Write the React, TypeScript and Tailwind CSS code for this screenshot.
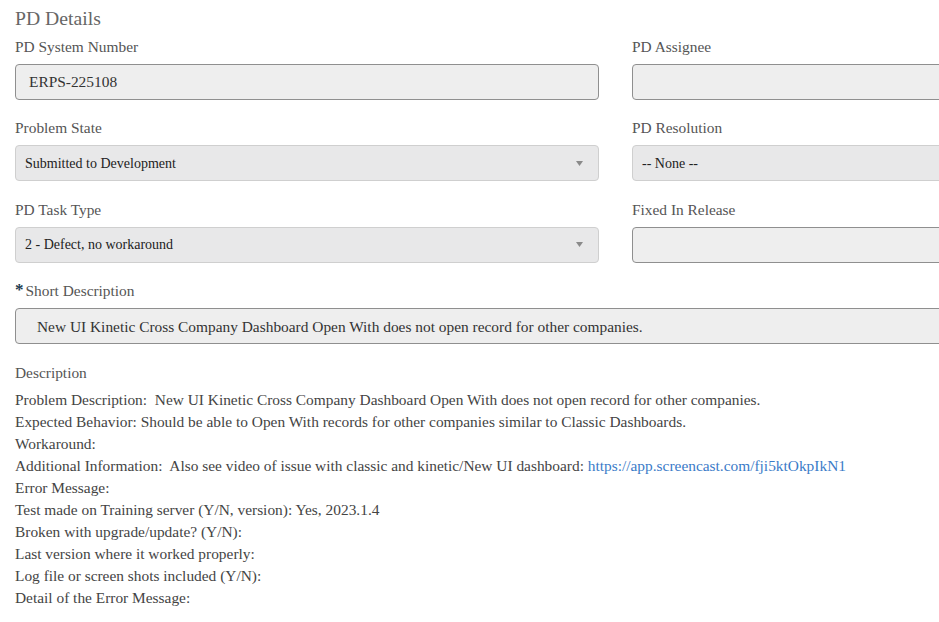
import React from "react";

const serif = { fontFamily: '"Liberation Serif", "Times New Roman", serif' };

const Label = ({ children, required }: { children: React.ReactNode; required?: boolean }) => (
  <div className="text-[15.4px] leading-[20px] text-[#555] h-[20px] flex items-start">
    {required && <span className="text-[#1d3b4f] text-[17px] font-bold mr-[2px] leading-[18px]">*</span>}
    {children}
  </div>
);

const TextBox = ({ value, pad = "pl-[13px]" }: { value?: string; pad?: string }) => (
  <div
    className={`h-[36px] rounded-[4px] border border-[#8f8f8f] bg-[#eeeeee] flex items-center ${pad} text-[15.4px] text-[#333]`}
  >
    {value}
  </div>
);

const Select = ({ value }: { value: string }) => (
  <div className="h-[36px] rounded-[4px] border border-[#cfcfcf] bg-[#e8e8e9] flex items-center justify-between pl-[9px] pr-[15px] text-[14px] text-[#222]">
    <span>{value}</span>
    <svg width="7" height="5" viewBox="0 0 7 5">
      <path d="M0 0 H7 L3.5 5 Z" fill="#8a8a8a" />
    </svg>
  </div>
);

const Field = ({ label, children, required }: { label: string; children: React.ReactNode; required?: boolean }) => (
  <div className="flex flex-col gap-[7px]">
    <Label required={required}>{label}</Label>
    {children}
  </div>
);

const lines: React.ReactNode[] = [
  "Problem Description:\u00a0 New UI Kinetic Cross Company Dashboard Open With does not open record for other companies.",
  "Expected Behavior: Should be able to Open With records for other companies similar to Classic Dashboards.",
  "Workaround:",
  <>
    Additional Information:{"\u00a0 "}Also see video of issue with classic and kinetic/New UI dashboard:{" "}
    <a className="text-[#3a7bc8]" href="#">
      https://app.screencast.com/fji5ktOkpIkN1
    </a>
  </>,
  "Error Message:",
  "Test made on Training server (Y/N, version): Yes, 2023.1.4",
  "Broken with upgrade/update? (Y/N):",
  "Last version where it worked properly:",
  "Log file or screen shots included (Y/N):",
  "Detail of the Error Message:",
];

export default function App() {
  return (
    <div className="w-[939px] h-[622px] overflow-hidden bg-white" style={serif}>
      <div className="w-[1250px] pl-[15px] pt-[6px]">
        <h2 className="text-[19.7px] leading-[24px] text-[#666] mb-[7px]">PD Details</h2>
        <div className="grid grid-cols-[584px_584px] gap-x-[33px] gap-y-[18.4px]">
          <Field label="PD System Number">
            <TextBox value="ERPS-225108" />
          </Field>
          <Field label="PD Assignee">
            <TextBox />
          </Field>
          <Field label="Problem State">
            <Select value="Submitted to Development" />
          </Field>
          <Field label="PD Resolution">
            <Select value="-- None --" />
          </Field>
          <Field label="PD Task Type">
            <Select value="2 - Defect, no workaround" />
          </Field>
          <Field label="Fixed In Release">
            <TextBox />
          </Field>
          <div className="col-span-2">
            <Field label="Short Description" required>
              <TextBox
                pad="pl-[21px]"
                value="New UI Kinetic Cross Company Dashboard Open With does not open record for other companies."
              />
            </Field>
          </div>
        </div>
        <div className="mt-[19px] text-[15.4px] leading-[20px] text-[#555]">Description</div>
        <div className="mt-[6px] text-[15.4px] leading-[22px] text-[#444]">
          {lines.map((l, i) => (
            <div key={i}>{l}</div>
          ))}
        </div>
      </div>
    </div>
  );
}
